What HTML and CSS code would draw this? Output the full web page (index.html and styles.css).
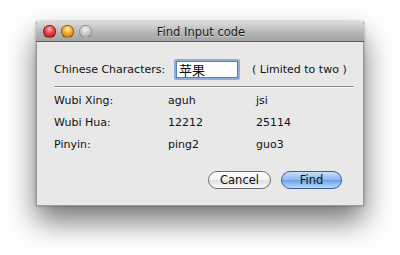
FILE: index.html
```html
<!DOCTYPE html>
<html>
<head>
<meta charset="utf-8">
<link rel="stylesheet" href="styles.css">
</head>
<body>
<div class="window">
  <div class="titlebar">
    <div class="lights">
      <span class="light red"></span>
      <span class="light yellow"></span>
      <span class="light gray"></span>
    </div>
    <div class="title">Find Input code</div>
  </div>
  <div class="content">
    <div class="input-row">
      <span class="label">Chinese Characters:</span>
      <div class="field">苹果</div>
      <span class="hint">( Limited to two )</span>
    </div>
    <div class="sep"></div>
    <div class="grid">
      <span>Wubi Xing:</span><span>aguh</span><span>jsi</span>
      <span>Wubi Hua:</span><span>12212</span><span>25114</span>
      <span>Pinyin:</span><span>ping2</span><span>guo3</span>
    </div>
    <div class="buttons">
      <div class="btn cancel">Cancel</div>
      <div class="btn find">Find</div>
    </div>
  </div>
</div>
</body>
</html>
```
FILE: styles.css
```css
html, body {
  margin: 0;
  padding: 0;
  background: #ffffff;
  width: 400px;
  height: 255px;
  overflow: hidden;
}
body {
  font-family: "DejaVu Sans", "Noto Sans CJK SC", sans-serif;
  font-size: 11px;
  color: #111;
}
.window {
  margin: 22px 0 0 36px;
  width: 328px;
  height: 184px;
  background: #e8e8e8;
  box-shadow: 0 15px 28px rgba(0,0,0,0.55), 0 0 3px rgba(0,0,0,0.3);
  display: flex;
  flex-direction: column;
  box-sizing: border-box;
  border: 1px solid #9a9a9a;
  border-top: none;
}
.titlebar {
  height: 19px;
  background: linear-gradient(#dcdcdc, #b6b6b6 55%, #a4a4a4);
  border-bottom: 1px solid #5c5c5c;
  border-radius: 4px 4px 0 0;
  position: relative;
  display: flex;
  align-items: center;
  justify-content: center;
  margin: 0 -1px;
}
.lights {
  position: absolute;
  left: 7px;
  top: 3px;
  display: flex;
  gap: 5.5px;
}
.light {
  width: 12.5px;
  height: 12.5px;
  border-radius: 50%;
  box-sizing: border-box;
  border: 1px solid rgba(0,0,0,0.35);
}
.red {
  background: radial-gradient(circle at 50% 30%, #ffb0a8 0%, #e8434a 45%, #a80f18 100%);
}
.yellow {
  background: radial-gradient(circle at 50% 30%, #fff0b0 0%, #f2ad2c 45%, #b8640a 100%);
}
.gray {
  background: radial-gradient(circle at 50% 30%, #f4f4f4 0%, #c8c8c8 50%, #9c9c9c 100%);
  border-color: rgba(0,0,0,0.2);
}
.title {
  font-size: 11.5px;
  color: #1a1a1a;
  text-shadow: 0 1px 0 rgba(255,255,255,0.5);
  margin-left: 2px;
  white-space: nowrap;
}
.content {
  padding: 17px 10px 0 17px;
  display: flex;
  flex-direction: column;
}
.input-row {
  display: flex;
  align-items: center;
  height: 21px;
  white-space: nowrap;
}
.label {
  width: 120px;
  flex-shrink: 0;
}
.field {
  width: 66px;
  flex-shrink: 0;
  height: 21px;
  box-sizing: border-box;
  border: 2px solid #8aaee0;
  box-shadow: inset 0 0 0 1px #5a7fb8;
  border-radius: 2px;
  background: #fff;
  font-family: "Noto Sans CJK SC", sans-serif;
  font-size: 13px;
  line-height: 17px;
  padding-left: 3px;
}
.hint {
  margin-left: 12px;
  flex-shrink: 0;
}
.sep {
  margin-top: 6px;
  height: 1px;
  background: #8e8e8e;
  border-bottom: 1px solid #f6f6f6;
  width: 300px;
}
.grid {
  margin-top: 1px;
  display: grid;
  grid-template-columns: 114px 88px auto;
  grid-auto-rows: 22px;
  align-items: center;
}
.buttons {
  margin-top: 16px;
  display: flex;
  justify-content: flex-end;
  gap: 10px;
  padding-right: 11px;
}
.btn {
  height: 18px;
  box-sizing: border-box;
  border-radius: 9px;
  display: flex;
  align-items: center;
  justify-content: center;
  font-size: 11.5px;
}
.cancel {
  width: 63px;
  border: 1px solid #6e6e6e;
  background: linear-gradient(#ffffff, #f2f2f2 50%, #e0e0e0 51%, #fafafa);
}
.find {
  width: 61px;
  border: 1px solid #3b5d94;
  background: linear-gradient(#c8def8, #8ab8ee 50%, #6aa2e8 51%, #b8dafc);
}
```
